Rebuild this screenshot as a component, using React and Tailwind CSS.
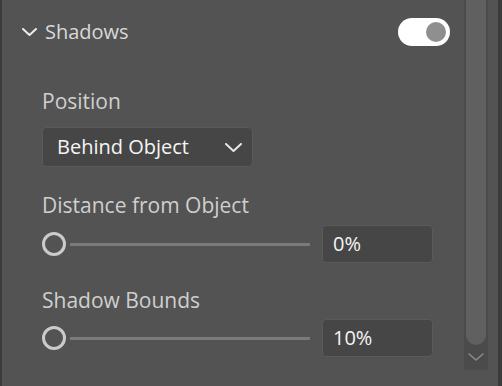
function Chevron({ className, w, h, stroke, width }) {
  return (
    <svg width={w} height={h} viewBox={`0 0 ${w} ${h}`} className={className} fill="none">
      <path d={`M1 1 L${w / 2} ${h - 1} L${w - 1} 1`} stroke={stroke} strokeWidth={width} strokeLinecap="round" strokeLinejoin="round" />
    </svg>
  )
}

function Slider({ value }) {
  return (
    <div className="flex items-center h-[38px] mt-[6px]">
      <div className="w-[24px] h-[24px] rounded-full border-[3px] border-[#cbcbcb] shrink-0" />
      <div className="ml-[4px] w-[240px] h-[3px] bg-[#7a7a7a]" />
      <div className="ml-[12px] w-[111px] h-[38px] rounded-[4px] bg-[#464646] border border-[#5a5a5a] flex items-center pl-[10px] text-[20px] text-[#f5f5f5] font-medium">
        {value}
      </div>
    </div>
  )
}

export default function App() {
  return (
    <div className="w-[502px] h-[386px] flex bg-[#535353] overflow-hidden" style={{ fontFamily: '"Open Sans", "Noto Sans", sans-serif' }}>
      <div className="w-[2px] bg-[#3b3b3b] shrink-0" />
      <div className="flex-1 pr-[14px]">
        <div className="flex items-center h-[32px] mt-[16px] pl-[20px]">
          <Chevron w={15} h={8} stroke="#ececec" width={2} />
          <span className="ml-[8px] text-[20px] leading-[32px] text-[#d9d9d9] font-medium">Shadows</span>
          <div className="ml-auto w-[52px] h-[28px] rounded-full bg-white flex items-center justify-end pr-[4px]">
            <div className="w-[20px] h-[20px] rounded-full bg-[#8f8f8f]" />
          </div>
        </div>
        <div className="pl-[40px]">
          <div className="mt-[39px] text-[21px] leading-[28px] text-[#cfcfcf]">Position</div>
          <div className="mt-[12px] w-[211px] h-[40px] rounded-[4px] bg-[#464646] border border-[#5a5a5a] flex items-center pl-[14px] pr-[10px]">
            <span className="text-[20px] text-[#f5f5f5] font-medium">Behind Object</span>
            <Chevron className="ml-auto" w={17} h={9} stroke="#e6e6e6" width={2} />
          </div>
          <div className="mt-[24px] text-[21px] leading-[28px] text-[#cfcfcf]">Distance from Object</div>
          <Slider value="0%" />
          <div className="mt-[23px] text-[21px] leading-[28px] text-[#cfcfcf]">Shadow Bounds</div>
          <div className="-mt-[1px]">
            <Slider value="10%" />
          </div>
        </div>
      </div>
      <div className="w-[24px] h-[370px] bg-[#4b4b4b] shrink-0 flex flex-col items-center">
        <div className="w-[20px] h-[345px] bg-[#606060] rounded-b-full" />
        <Chevron className="mt-[8px]" w={16} h={8} stroke="#8c8c8c" width={1.5} />
      </div>
      <div className="w-[10px] shrink-0" />
      <div className="w-[4px] bg-[#3b3b3b] shrink-0" />
    </div>
  )
}
